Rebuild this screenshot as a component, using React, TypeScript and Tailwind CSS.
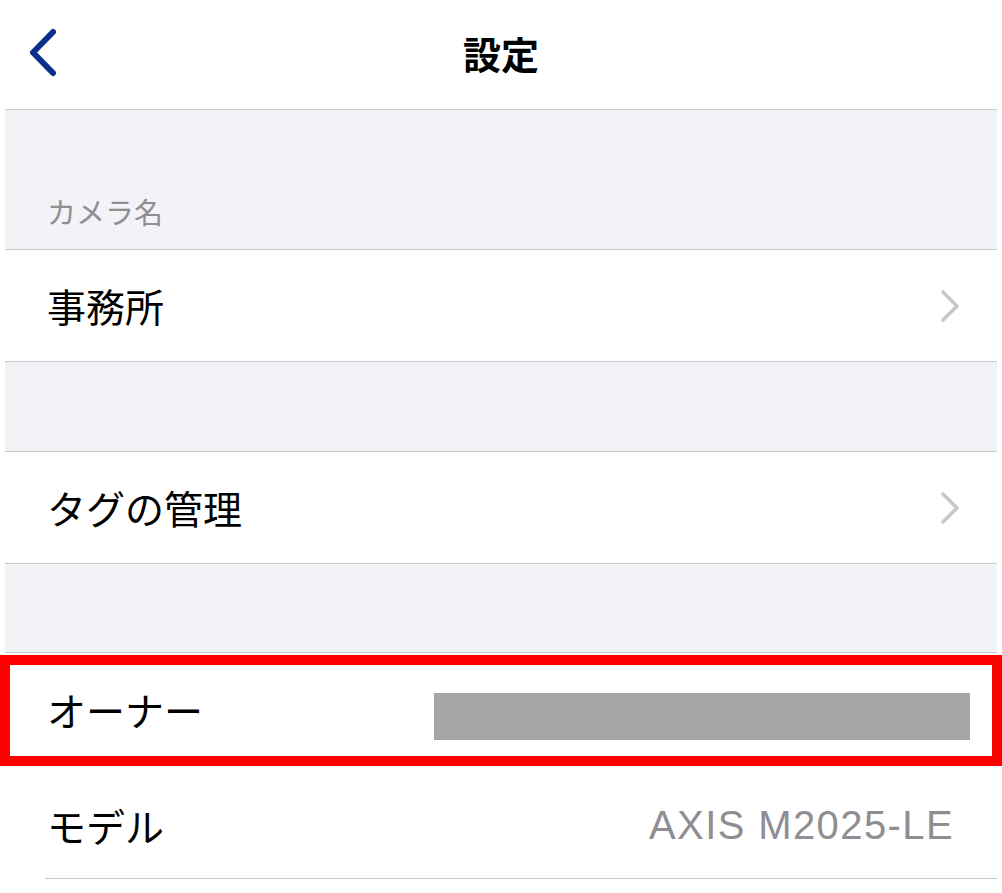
import { ReactNode } from "react";

const JP = "font-['Noto_Sans_CJK_JP','Noto_Sans',sans-serif]";

function Chevron() {
  return (
    <svg width="22" height="34" viewBox="0 0 22 34" fill="none" className="shrink-0">
      <path d="M4 3 L18 17 L4 31" stroke="#c7c7cc" strokeWidth="3.6" strokeLinecap="round" strokeLinejoin="round" />
    </svg>
  );
}

function Row({ children, right, className = "" }: { children: ReactNode; right?: ReactNode; className?: string }) {
  return (
    <div className={`relative flex items-center justify-between bg-white pl-[42px] ${className}`}>
      <span className={`${JP} text-[39px] leading-none text-black`}>{children}</span>
      {right}
    </div>
  );
}

function Spacer({ h }: { h: string }) {
  return <div className={`${h} bg-[#f2f2f7] border-y border-[#c8c7cc]`} />;
}

export default function App() {
  return (
    <div className="min-h-screen w-full bg-white overflow-hidden">
      {/* Navigation bar */}
      <div className="relative flex h-[109px] items-center justify-center pb-[4px]">
        <button className="absolute left-[26px] top-[28px]">
          <svg width="34" height="50" viewBox="0 0 34 50" fill="none">
            <path d="M27 4 L7 24.5 L27 45" stroke="#0c2f8c" strokeWidth="6" strokeLinecap="round" strokeLinejoin="round" />
          </svg>
        </button>
        <h1 className={`${JP} text-[38px] font-bold leading-none text-black`}>設定</h1>
      </div>

      <div className="px-[5px]">
        {/* Section header */}
        <div className="flex h-[141px] items-end bg-[#f2f2f7] border-y border-[#c8c7cc] pb-[23px] pl-[42px]">
          <span className={`${JP} text-[29px] leading-none text-[#8e8e93]`}>カメラ名</span>
        </div>

        <Row className="h-[111px] pr-[36px]" right={<Chevron />}>事務所</Row>
        <Spacer h="h-[91px]" />
        <Row className="h-[111px] pr-[36px]" right={<Chevron />}>タグの管理</Row>
        <Spacer h="h-[90px]" />

        <Row
          className="h-[113px] pr-[27px]"
          right={<div className="mt-[13px] h-[47px] w-[536px] bg-[#a6a6a6]" />}
        >
          オーナー
          {/* highlight frame */}
          <div className="pointer-events-none absolute -left-[5px] -right-[5px] top-[2px] h-[111px] border-[10px] border-[#ff0000]" />
        </Row>

        <div className="pl-[40px]">
          <div className="flex h-[113px] items-center justify-between border-b border-[#c8c7cc] pl-[2px] pr-[43px] pt-[6px]">
            <span className={`${JP} text-[39px] leading-none text-black`}>モデル</span>
            <span className="font-['Liberation_Sans',Arial,sans-serif] text-[40px] leading-none tracking-[1.4px] text-[#8e8e93]">
              AXIS M2025-LE
            </span>
          </div>
        </div>
      </div>
    </div>
  );
}
